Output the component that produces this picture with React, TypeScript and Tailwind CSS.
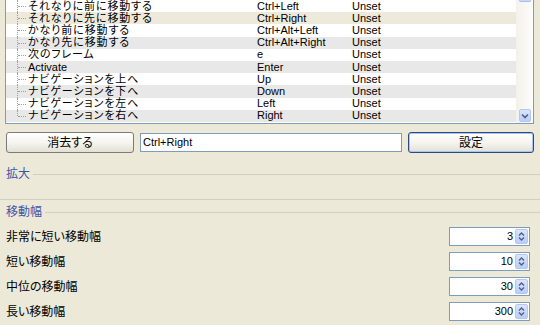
import React from "react";

const rows: [string, string, string, boolean][] = [
  ["それなりに前に移動する", "Ctrl+Left", "Unset", true],
  ["それなりに先に移動する", "Ctrl+Right", "Unset", true],
  ["かなり前に移動する", "Ctrl+Alt+Left", "Unset", true],
  ["かなり先に移動する", "Ctrl+Alt+Right", "Unset", true],
  ["次のフレーム", "e", "Unset", true],
  ["Activate", "Enter", "Unset", false],
  ["ナビゲーションを上へ", "Up", "Unset", true],
  ["ナビゲーションを下へ", "Down", "Unset", true],
  ["ナビゲーションを左へ", "Left", "Unset", true],
  ["ナビゲーションを右へ", "Right", "Unset", true],
];

const jp = "[font-family:'Liberation_Sans','Noto_Sans_CJK_JP',sans-serif] [font-feature-settings:'palt']";

function rowBg(i: number) {
  if (i === 1) return "bg-[#eeeadb]";
  if (i % 2 === 1) return "bg-[#e8e8e8]";
  return "bg-white";
}

function SpinBox({ value }: { value: string }) {
  return (
    <div className="flex h-[19px] w-[81px] items-center border border-[#7f9db9] bg-white">
      <span className="flex-1 pr-[2px] text-right text-[11px] leading-none text-black [font-family:'Liberation_Sans',sans-serif]">
        {value}
      </span>
      <div className="mr-[1px] flex h-[15px] w-[13px] flex-col items-center justify-center rounded-[2px] border border-[#b4c7f3] bg-gradient-to-b from-[#dbe5fd] to-[#b9cdf8]">
        <svg width="7" height="11" viewBox="0 0 7 11">
          <path d="M1 4.5 L3.5 2 L6 4.5" fill="none" stroke="#4d6185" strokeWidth="1.4" />
          <path d="M1 6.5 L3.5 9 L6 6.5" fill="none" stroke="#4d6185" strokeWidth="1.4" />
        </svg>
      </div>
    </div>
  );
}

function SpinRow({ label, value }: { label: string; value: string }) {
  return (
    <div className="flex h-[25px] items-center justify-between pl-[6px] pr-[10px]">
      <span className={`text-[12px] leading-none text-black ${jp}`}>{label}</span>
      <SpinBox value={value} />
    </div>
  );
}

export default function App() {
  return (
    <div className={`h-[325px] w-[540px] overflow-hidden bg-[#ece9d8] ${jp}`}>
      {/* List */}
      <div className="pl-[5px] pr-[6px]">
        <div className="flex h-[124px] border-x border-b border-[#7f9db9] bg-white">
          <div className="flex-1 overflow-hidden">
            {rows.map((r, i) => (
              <div key={i} className={`flex h-[12.2px] items-center ${rowBg(i)}`}>
                <div className="relative h-full w-[22px] shrink-0">
                  <div
                    className={`absolute left-[11px] top-0 border-l border-dotted border-[#a0a0a0] ${
                      i === rows.length - 1 ? "h-1/2" : "h-full"
                    }`}
                  />
                  <div className="absolute left-[12px] top-1/2 w-[8px] border-t border-dotted border-[#a0a0a0]" />
                </div>
                <div
                  className={`w-[229px] shrink-0 text-[11px] leading-none text-black ${
                    r[3] ? "tracking-[0.9px]" : ""
                  }`}
                >
                  {r[0]}
                </div>
                <div className="w-[95px] shrink-0 text-[11px] leading-none text-black">{r[1]}</div>
                <div className="flex-1 text-[11px] leading-none text-black">{r[2]}</div>
              </div>
            ))}
          </div>
          <div className="flex w-[17px] shrink-0 flex-col bg-gradient-to-r from-[#f3f1ea] to-[#fdfdfb] pl-[3px] pr-[2px]">
            <div className="h-[2px] rounded-b-[2px] border-x border-b border-[#a9bdf0] bg-[#c9d7fb]" />
            <div className="flex-1" />
            <div className="mb-[1px] flex h-[13px] items-center justify-center rounded-[2px] border border-[#b4c7f3] bg-gradient-to-b from-[#dbe5fd] to-[#b9cdf8]">
              <svg width="8" height="6" viewBox="0 0 8 6">
                <path d="M1 1.5 L4 4.5 L7 1.5" fill="none" stroke="#4d6185" strokeWidth="1.6" />
              </svg>
            </div>
          </div>
        </div>
      </div>

      {/* Buttons row */}
      <div className="mt-[8px] flex h-[21px] items-center gap-[6px] px-[6px]">
        <button className="flex h-[21px] w-[128px] items-center justify-center rounded-[3px] border border-[#7b7b7b] bg-gradient-to-b from-[#ffffff] via-[#f6f5f0] to-[#e3e0d3] text-[12px] leading-none text-black">
          消去する
        </button>
        <div className="flex h-[19px] flex-1 items-center border border-[#7f9db9] bg-white pl-[2px] text-[11px] leading-none text-black">
          Ctrl+Right
        </div>
        <button className="flex h-[21px] w-[126px] items-center justify-center rounded-[3px] border border-[#2a4a85] bg-gradient-to-b from-[#ffffff] via-[#f6f5f0] to-[#e3e0d3] text-[12px] leading-none text-black shadow-[inset_0_0_0_1px_#a9c4f0]">
          設定
        </button>
      </div>

      {/* 拡大 */}
      <div className="mt-[15px] flex h-[12px] items-center pl-[6px]">
        <span className="text-[12px] leading-none text-[#3f55a6]">拡大</span>
        <div className="ml-[3px] h-px flex-1 bg-[#d3cfbd]" />
      </div>
      <div className="mt-[19px] h-px bg-[#d3cfbd]" />

      {/* 移動幅 */}
      <div className="mt-[6px] flex h-[12px] items-center pl-[6px]">
        <span className="text-[12px] leading-none text-[#3f55a6]">移動幅</span>
        <div className="ml-[3px] h-px flex-1 bg-[#d3cfbd]" />
      </div>

      <div className="mt-[6px]">
        <SpinRow label="非常に短い移動幅" value="3" />
        <SpinRow label="短い移動幅" value="10" />
        <SpinRow label="中位の移動幅" value="30" />
        <SpinRow label="長い移動幅" value="300" />
      </div>
    </div>
  );
}
